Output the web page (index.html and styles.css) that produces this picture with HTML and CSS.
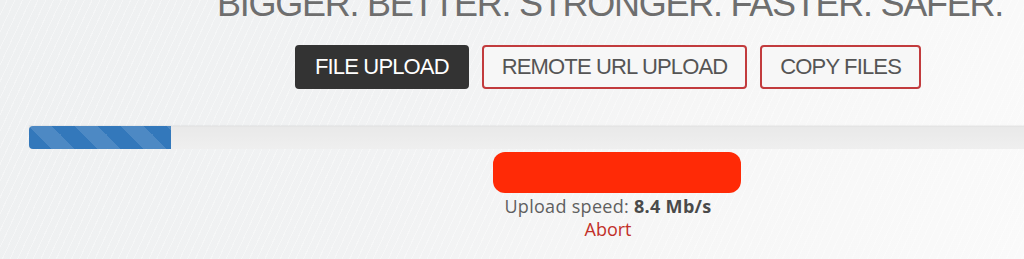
FILE: index.html
```html
<!DOCTYPE html>
<html lang="en">
<head>
<meta charset="utf-8">
<title>Upload</title>
<link rel="stylesheet" href="styles.css">
</head>
<body>
<div class="page">
  <div class="column">
    <h1 class="slogan">BIGGER. BETTER. STRONGER. FASTER. SAFER.</h1>
    <div class="tabs">
      <button class="tab tab-active">FILE UPLOAD</button>
      <button class="tab">REMOTE URL UPLOAD</button>
      <button class="tab">COPY FILES</button>
    </div>
  </div>
  <div class="progress">
    <div class="progress-bar" style="width:142px"></div>
  </div>
  <div class="column status">
    <div class="filename"></div>
    <div class="speed">Upload speed: <b>8.4 Mb/s</b></div>
    <a class="abort" href="#">Abort</a>
  </div>
</div>
</body>
</html>
```

FILE: styles.css
```css
html, body {
  margin: 0;
  padding: 0;
  height: 100%;
}
body {
  font-family: "Liberation Sans", Arial, sans-serif;
  background:
    repeating-linear-gradient(115deg, rgba(255,255,255,0) 0 6px, rgba(255,255,255,0.35) 6px 7px),
    linear-gradient(110deg, #eef0f1 0%, #f1f2f3 40%, #f6f6f6 65%, #fafafa 100%);
  overflow: hidden;
}
.page {
  width: 1024px;
  height: 259px;
}
.column {
  margin-left: 192px;
  width: 832px;
  display: flex;
  flex-direction: column;
  align-items: center;
}
.slogan {
  margin: -14.5px 0 0 0;
  font-size: 36px;
  line-height: 36px;
  font-weight: normal;
  letter-spacing: -1.25px;
  color: #6e6e6e;
  white-space: nowrap;
  padding-left: 4px;
}
.tabs {
  display: flex;
  gap: 13px;
  margin-top: 23.5px;
}
.tab {
  height: 44px;
  padding: 0 18px;
  border: 2px solid #c23b3d;
  border-radius: 4px;
  background: #f7f7f7;
  color: #555;
  font-family: "Liberation Sans", Arial, sans-serif;
  font-size: 22px;
  letter-spacing: -0.85px;
  line-height: 40px;
}
.tab-active {
  background: #333;
  border-color: #333;
  color: #fff;
}
.progress {
  margin: 37px 0 0 29px;
  height: 23px;
  background: linear-gradient(#e0e0e0 0, #e9e9e9 1px, #efefef 100%);
  box-shadow: 0 -1px 1px rgba(0,0,0,0.04);
}
.progress-bar {
  height: 100%;
  border-radius: 4px 0 0 4px;
  background-color: #3378bb;
  background-image: linear-gradient(45deg, rgba(255,255,255,.13) 25%, transparent 25%, transparent 50%, rgba(255,255,255,.13) 50%, rgba(255,255,255,.13) 75%, transparent 75%, transparent);
  background-size: 46px 46px;
}
.status {
  font-family: "Open Sans", sans-serif;
  font-size: 18px;
  line-height: 24px;
  color: #606060;
}
.filename {
  margin-top: 3px;
  margin-left: 18px;
  width: 248px;
  height: 41px;
  border-radius: 12px;
  background: #ff2a06;
}
.speed {
  margin-top: 1px;
  letter-spacing: 0.3px;
}
.speed b {
  color: #4a4a4a;
}
.abort {
  color: #c23029;
  text-decoration: none;
  line-height: 23px;
}
```
